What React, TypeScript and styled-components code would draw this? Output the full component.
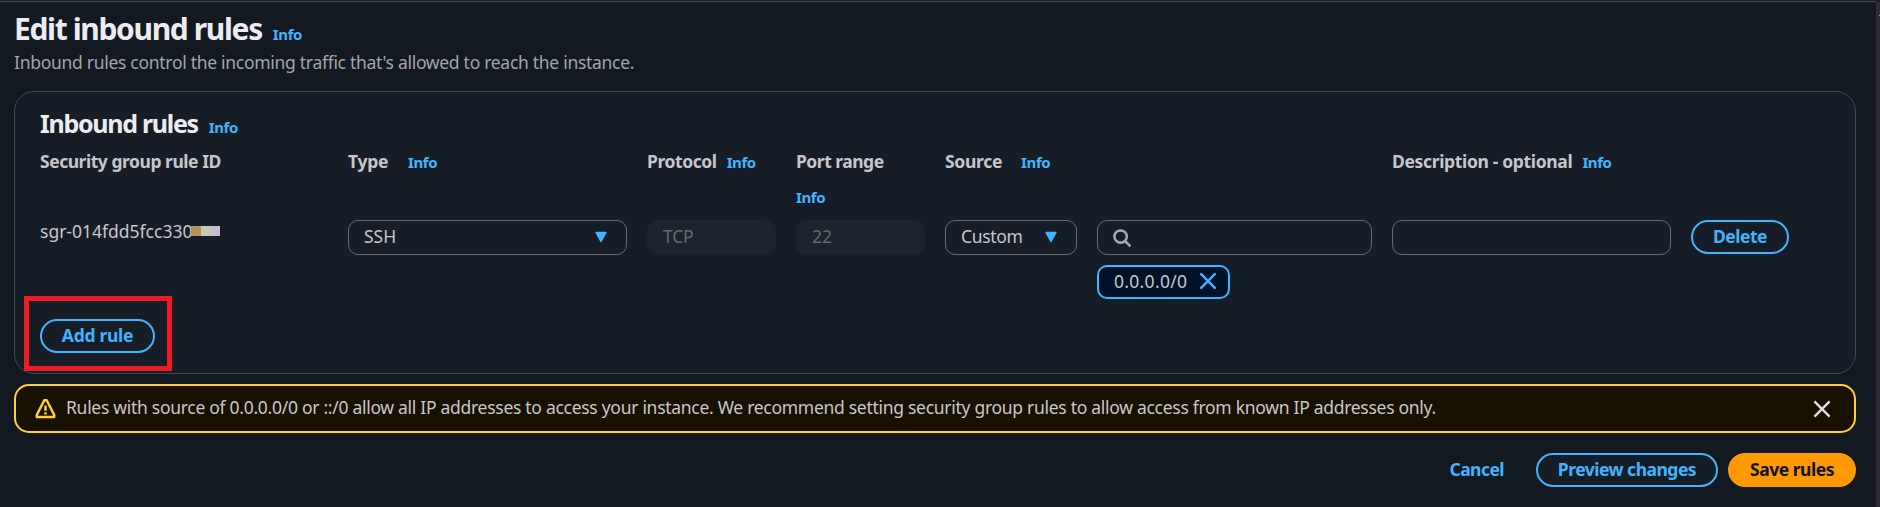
import React from "react";
import styled, { createGlobalStyle } from "styled-components";

const GlobalStyle = createGlobalStyle`
  *, *::before, *::after { box-sizing: border-box; }
  html, body { margin: 0; padding: 0; background: #131920; }
  body {
    overflow: hidden;
    font-family: "Noto Sans", "Open Sans", sans-serif;
    font-size: 17.5px;
    line-height: 25px;
    color: #c6c6cd;
  }
  button, h1, h2, p { font: inherit; margin: 0; padding: 0; }
`;

const Page = styled.div`
  display: flex;
  height: 507px;
  border-top: 1px solid #171d27;
`;

const Main = styled.main`
  flex: 1;
  display: flex;
  flex-direction: column;
  border-top: 1px solid #424650;
  padding: 7px 20px 0 14px;
`;

const ScrollTrack = styled.div`
  width: 4px;
  margin-top: 1px;
  background: #2c2c2c;
  display: flex;
  justify-content: flex-end;
  padding-top: 13px;
`;

const ScrollArrow = styled.span`
  width: 1px;
  height: 1px;
  background: #9a9a9a;
`;

const Txt = styled.span<{ $ls?: number }>`
  letter-spacing: ${(p) => p.$ls ?? 0}px;
  white-space: pre;
`;

const InfoLink = styled.a`
  color: #42b4ff;
  font-size: 15px;
  font-weight: 700;
  letter-spacing: -0.4px;
`;

const TitleRow = styled.div`
  display: flex;
  align-items: baseline;
  gap: 11px;
  height: 40px;
`;

const PageTitle = styled.h1`
  font-size: 30px;
  line-height: 40px;
  font-weight: 700;
  letter-spacing: -1.36px;
  color: #ebebf0;
  white-space: nowrap;
`;

const Subtitle = styled.p`
  margin-top: 1px;
  color: #a4a4ad;
  letter-spacing: -0.29px;
`;

const Panel = styled.section`
  position: relative;
  margin-top: 16px;
  height: 283px;
  border: 1px solid #424650;
  border-radius: 20px;
  background: #171d27;
  padding: 16px 25px 0;
`;

const PanelHeader = styled.div`
  display: flex;
  align-items: baseline;
  gap: 11px;
  height: 41px;
`;

const PanelTitle = styled.h2`
  font-size: 25px;
  line-height: 30px;
  font-weight: 700;
  letter-spacing: -1.29px;
  color: #ebebf0;
`;

const Grid = styled.div`
  display: grid;
  grid-template-columns: 288px 279px 129px 129px 132px 275px 279px 98px;
  column-gap: 20px;
`;

const HeadCell = styled.div<{ $gap?: number; $span?: number }>`
  grid-column: span ${(p) => p.$span ?? 1};
  display: flex;
  flex-wrap: wrap;
  align-items: baseline;
  align-content: flex-start;
  column-gap: ${(p) => p.$gap ?? 11}px;
  row-gap: 11px;
  height: 71px;
  font-weight: 700;
`;

const RuleId = styled.div`
  display: flex;
  line-height: 22px;
`;

const Redaction = styled.span`
  display: flex;
  margin-top: 6px;
  margin-left: -1px;
  height: 10px;
`;

const Pixel = styled.i<{ $c: string; $w: number }>`
  width: ${(p) => p.$w}px;
  background: ${(p) => p.$c};
`;

const Field = styled.div<{ $disabled?: boolean; $search?: boolean }>`
  display: flex;
  align-items: center;
  justify-content: space-between;
  height: 35px;
  padding: ${(p) => (p.$search ? "0 15px 0 14px" : "0 19px 2px 15px")};
  border: 1px solid ${(p) => (p.$disabled ? "#1b232c" : "#656871")};
  border-radius: 10px;
  background: ${(p) => (p.$disabled ? "#1b232c" : "#171d27")};
  color: ${(p) => (p.$disabled ? "#656871" : "#c6c6cd")};
`;

const SourceCell = styled.div`
  display: flex;
  flex-direction: column;
  align-items: flex-start;
  gap: 10px;
  & > ${Field} { width: 100%; }
`;

const Token = styled.div`
  display: flex;
  align-items: center;
  gap: 12px;
  width: 133px;
  height: 34px;
  padding: 0 0 2px 15px;
  border: 2px solid #42b4ff;
  border-radius: 10px;
  background: #001129;
`;

const Button = styled.button<{ $w: number; $primary?: boolean }>`
  width: ${(p) => p.$w}px;
  height: 34px;
  border: 2px solid ${(p) => (p.$primary ? "#ff9900" : "#42b4ff")};
  border-radius: 17px;
  background: ${(p) => (p.$primary ? "#ff9900" : "#171d27")};
  color: ${(p) => (p.$primary ? "#0f141a" : "#42b4ff")};
  font-weight: 700;
  line-height: 28px;
  padding-bottom: 2px;
`;

const AddRow = styled.div`
  margin-top: 20px;
`;

const Highlight = styled.div`
  position: absolute;
  left: 9px;
  top: 204px;
  width: 148px;
  height: 75px;
  border: 5px solid #ed1c24;
  pointer-events: none;
`;

const Alert = styled.div`
  display: flex;
  align-items: center;
  margin-top: 10px;
  height: 49px;
  padding: 0 23px 0 19px;
  border: 2px solid #ffd230;
  border-radius: 15px;
  background: #191100;
`;

const AlertText = styled.p`
  flex: 1;
  margin-left: 10px;
  padding-bottom: 2px;
  letter-spacing: -0.287px;
  white-space: nowrap;
`;

const Footer = styled.footer`
  display: flex;
  justify-content: flex-end;
  align-items: center;
  margin-top: 20px;
`;

const CancelLink = styled.a`
  margin-right: 32px;
  padding-bottom: 1px;
  color: #42b4ff;
  font-weight: 700;
`;

const SaveSlot = styled.div`
  margin-left: 10px;
`;

const Caret = () => (
  <svg width="12" height="12" viewBox="0 0 12 12">
    <path d="M1.2 1.6h9.6L6 10.4z" fill="#42b4ff" stroke="#42b4ff" strokeWidth="1.6" strokeLinejoin="round" />
  </svg>
);

const SearchIcon = () => (
  <svg width="20" height="20" viewBox="0 0 20 20" fill="none" stroke="#a9a9b2" strokeWidth="2.5">
    <circle cx="8.6" cy="8.6" r="6.2" />
    <path d="M13 13l5.4 5.4" />
  </svg>
);

const Cross = ({ color }: { color: string }) => (
  <svg width="18" height="18" viewBox="0 0 18 18" fill="none" stroke={color} strokeWidth="2.4">
    <path d="M1.4 1.4l15.2 15.2M16.6 1.4L1.4 16.6" />
  </svg>
);

const WarningIcon = () => (
  <svg width="21" height="21" viewBox="0 0 21 21" fill="none" stroke="#ffd230" strokeWidth="2.5" strokeLinejoin="round">
    <path d="M9.3 2.2h2.4L19.2 17v2H1.8v-2z" />
    <path d="M10.5 7.5v5.2M10.5 14.2v2.3" />
  </svg>
);

export default function App() {
  return (
    <>
      <GlobalStyle />
      <Page>
        <Main>
          <TitleRow>
            <PageTitle>Edit inbound rules</PageTitle>
            <InfoLink>Info</InfoLink>
          </TitleRow>
          <Subtitle>Inbound rules control the incoming traffic that's allowed to reach the instance.</Subtitle>

          <Panel>
            <PanelHeader>
              <PanelTitle>Inbound rules</PanelTitle>
              <InfoLink>Info</InfoLink>
            </PanelHeader>
            <Grid>
              <HeadCell><Txt $ls={-0.47}>Security group rule ID</Txt></HeadCell>
              <HeadCell $gap={20}><Txt $ls={-0.3}>Type</Txt><InfoLink>Info</InfoLink></HeadCell>
              <HeadCell $gap={10}><Txt $ls={-0.42}>Protocol</Txt><InfoLink>Info</InfoLink></HeadCell>
              <HeadCell $gap={20}><Txt $ls={-0.5}>Port range</Txt><InfoLink>Info</InfoLink></HeadCell>
              <HeadCell $gap={19} $span={2}><Txt $ls={-0.3}>Source</Txt><InfoLink>Info</InfoLink></HeadCell>
              <HeadCell $gap={10} $span={2}><Txt $ls={-0.34}>Description - optional</Txt><InfoLink>Info</InfoLink></HeadCell>

              <RuleId>
                <Txt>sgr-014fdd5fcc330</Txt>
                <Redaction>
                  <Pixel $c="#b7915a" $w={10} />
                  <Pixel $c="#c8c8b0" $w={10} />
                  <Pixel $c="#c9bccb" $w={9} />
                </Redaction>
              </RuleId>
              <Field><Txt>SSH</Txt><Caret /></Field>
              <Field $disabled><Txt $ls={-0.2}>TCP</Txt></Field>
              <Field $disabled><Txt>22</Txt></Field>
              <Field><Txt $ls={-0.35}>Custom</Txt><Caret /></Field>
              <SourceCell>
                <Field $search><SearchIcon /></Field>
                <Token><Txt $ls={0.3}>0.0.0.0/0</Txt><Cross color="#42b4ff" /></Token>
              </SourceCell>
              <Field />
              <Button $w={98}><Txt $ls={-0.5}>Delete</Txt></Button>
            </Grid>
            <AddRow>
              <Button $w={115}><Txt $ls={-0.28}>Add rule</Txt></Button>
            </AddRow>
            <Highlight />
          </Panel>

          <Alert>
            <WarningIcon />
            <AlertText>
              Rules with source of 0.0.0.0/0 or ::/0 allow all IP addresses to access your instance. We recommend setting security group rules to allow access from known IP addresses only.
            </AlertText>
            <Cross color="#dedee3" />
          </Alert>

          <Footer>
            <CancelLink><Txt $ls={-0.55}>Cancel</Txt></CancelLink>
            <Button $w={182}><Txt $ls={-0.5}>Preview changes</Txt></Button>
            <SaveSlot><Button $w={128} $primary><Txt $ls={-0.48}>Save rules</Txt></Button></SaveSlot>
          </Footer>
        </Main>
        <ScrollTrack><ScrollArrow /></ScrollTrack>
      </Page>
    </>
  );
}
